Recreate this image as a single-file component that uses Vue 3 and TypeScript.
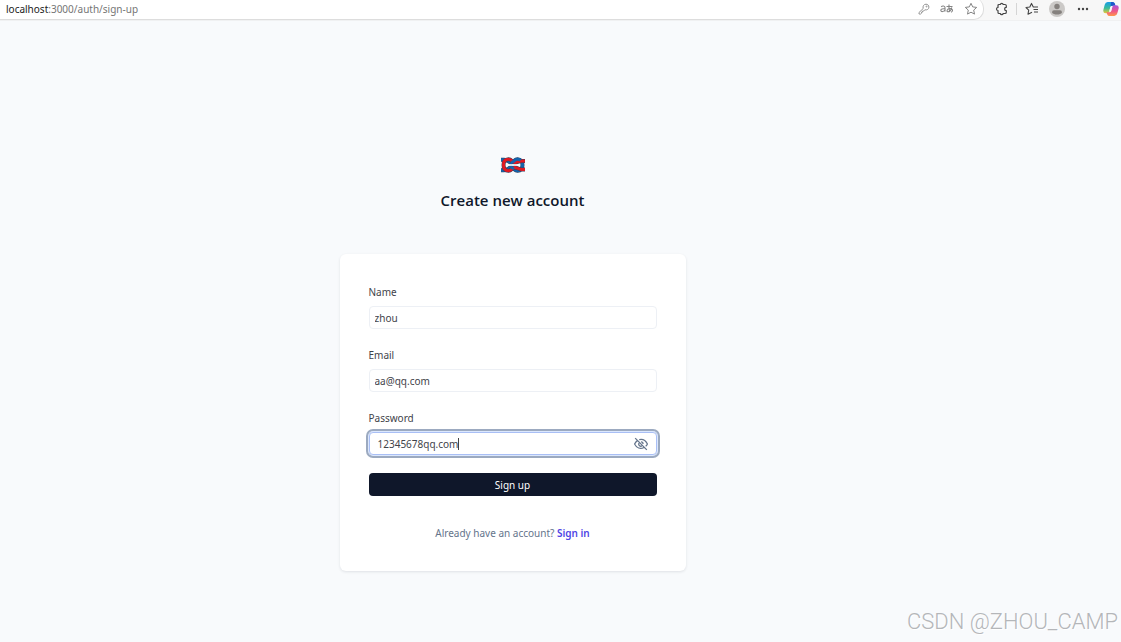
<script setup lang="ts">
import { ref } from 'vue'

const name = ref('zhou')
const email = ref('aa@qq.com')
const password = ref('12345678qq.com')
const visible = ref(true)
</script>

<template>
  <div class="screen">
    <header class="toolbar">
      <div class="address">
        <span class="url"><b>localhost</b>:3000/auth/sign-up</span>
        <button class="tool key" aria-label="Saved passwords">
          <svg width="12" height="12" viewBox="0 0 12 12" fill="none" stroke="#959595">
            <path d="M5.2 5.5C4.5 3.2 5.8 1.2 8 1.2c1.7 0 2.9 1.3 2.9 2.9C10.9 6.200 9 7.300 6.800 6.800L5.700 8H4.600v1.100H3.500v1.200L2.700 11H1V9.500z" />
            <circle cx="8.500" cy="3.500" r=".5" />
          </svg>
        </button>
        <button class="tool translate" aria-label="Translate">
          <svg width="14" height="12" viewBox="0 0 14 12" fill="none" stroke="#858585" stroke-width="1.100">
            <path d="M1.200 3.800c1-1.100 3.800-1.100 3.800.8v4M5 5.800C2.500 5.500.8 6.100.8 7.300c0 1.800 3 1.700 4.200-.3" />
            <path d="M6.500 3.500h6M9 1.500c-.3 3 0 5 .7 7M11.800 4.500C11 7 9.500 8.800 8 8.800S6.600 6 9.500 5.500s4.200 2.700 1.500 3.700" />
          </svg>
        </button>
        <button class="tool star" aria-label="Add to favorites">
          <svg width="14" height="14" viewBox="0 0 14 14" fill="none" stroke="#858585" stroke-linejoin="round">
            <path d="m7 1.300 1.700 3.600 4 .5-3 2.700.8 4L7 10.200l-3.500 1.900.8-4-3-2.700 4-.5z" />
          </svg>
        </button>
      </div>
      <button class="tool" aria-label="Extensions">
        <svg width="14" height="14" viewBox="0 0 14 14" fill="none" stroke="#444" stroke-width="1.200" stroke-linejoin="round">
          <path d="M4 2.500h1.300a1.500 1.500 0 0 1 2.900 0H10q1.300 0 1.300 1.300V5.300a1.700 1.700 0 0 0 0 3.400V10.200q0 1.300-1.300 1.300H8.200a1.500 1.500 0 0 1-2.900 0H4q-1 0-1-1V8.500a1.500 1.500 0 0 1 0-3V3.500q0-1 1-1z" />
        </svg>
      </button>
      <span class="divider"></span>
      <button class="tool favorites" aria-label="Favorites">
        <svg width="14" height="14" viewBox="0 0 14 14" fill="none" stroke="#444" stroke-width="1.100" stroke-linejoin="round">
          <path d="M13 5H8.300L6.500 1.400 4.800 5l-3.800.5 2.700 2.700-.7 4L7 10.200M8.500 7.500H13M9 10h4" />
        </svg>
      </button>
      <button class="tool profile" aria-label="Profile">
        <svg width="16" height="16" viewBox="0 0 16 16">
          <circle cx="8" cy="8" r="8" fill="#cbc9c7" />
          <circle cx="8" cy="5.500" r="2.700" fill="#85817e" />
          <path d="M3 11.500Q3 9.200 5 9.200h6q2 0 2 2.300c-1.500 2.700-8.500 2.700-10 0z" fill="#85817e" />
        </svg>
      </button>
      <button class="tool more" aria-label="More">
        <svg width="12" height="4" viewBox="0 0 12 4" fill="#444"><circle cx="2" cy="2" r="1.200" /><circle cx="6" cy="2" r="1.200" /><circle cx="10" cy="2" r="1.200" /></svg>
      </button>
      <button class="tool copilot" aria-label="Copilot">
        <svg width="16" height="16" viewBox="0 0 17 16">
          <defs>
            <linearGradient id="cool" x1="0" y1="0" x2="0" y2="1"><stop stop-color="#159be7" /><stop offset=".55" stop-color="#3bbd9a" /><stop offset="1" stop-color="#e9c832" /></linearGradient>
            <linearGradient id="warm" x1="0" y1="0" x2="0" y2="1"><stop stop-color="#a951dc" /><stop offset=".55" stop-color="#ef5688" /><stop offset="1" stop-color="#ff9848" /></linearGradient>
          </defs>
          <path d="M5 .5h5q2 0 2.600 2l.6 2H9.500q-1.200 0-1.600 1.300L6.600 11q-.5 1.500-2 1.500H3Q-.5 12.500.5 8.500l1.300-5Q2.500.5 5 .5z" fill="url(#cool)" />
          <path d="M8.500.5H10q2 0 2.600 2l.6 2H9.500q-1 0-1.500 1z" fill="#2056cb" />
          <path d="M12 15.500H7q-2 0-2.600-2l-.6-2H7q1.300 0 1.700-1.300L10 5.500Q10.500 4 12 4h2q3.500 0 2.500 4l-1.300 4.500Q14.500 15.500 12 15.500z" fill="url(#warm)" />
          <path d="M7.800 5.500h2L8.600 10.500H6.700z" fill="#f7f7f7" />
        </svg>
      </button>
    </header>

    <main class="page">
      <svg class="logo" width="24" height="16" viewBox="0 0 24 16" fill="none">
        <path class="edge" d="M0 2.700h3C7 2.700 8 6 10.500 5.500 13 5 13.500 2.300 16.500 2.300c3.500 0 5 2.700 5 5.700s-1.500 5.700-5 5.700c-3 0-3.500-2.700-6-3.200C8 10 7 13.300 3 13.300H0" />
        <path class="blue" d="M0 2.700h3C7 2.700 8 6 10.500 5.500 13 5 13.500 2.300 16.500 2.300c3.500 0 5 2.700 5 5.700s-1.500 5.700-5 5.700c-3 0-3.500-2.700-6-3.200C8 10 7 13.300 3 13.300H0" />
        <path class="edge" d="M24 4h-3C17 4 16 6 13.500 5.500 11 5 10.500 2.300 7.500 2.300 4 2.300 2.500 5 2.500 8s1.500 5.700 5 5.700c3 0 3.500-2.700 6-3.200 2.500-.5 3.500 2 7.500 2h3" />
        <path class="red" d="M24 4h-3C17 4 16 6 13.500 5.500 11 5 10.500 2.300 7.500 2.300 4 2.300 2.500 5 2.500 8s1.500 5.700 5 5.700c3 0 3.500-2.700 6-3.200 2.500-.5 3.500 2 7.500 2h3" />
        <path class="blue" d="M10 5.500C13 5.500 13.500 2.300 16.500 2.300q1.800 0 3 1" />
        <path class="blue" d="M9.500 10.300q2 .2 3.300 1.700" />
        <path d="M8 8h8" stroke="#e4edf4" stroke-width="1.600" />
      </svg>
      <h1>Create new account</h1>

      <form class="card" @submit.prevent>
        <div class="field">
          <label for="name">Name</label>
          <input id="name" v-model="name" type="text" />
        </div>
        <div class="field">
          <label for="email">Email</label>
          <input id="email" v-model="email" type="email" />
        </div>
        <div class="field secret">
          <label for="password">Password</label>
          <div class="password">
            <input id="password" v-model="password" :type="visible ? 'text' : 'password'" />
            <span class="caret"></span>
            <button type="button" class="eye" aria-label="Toggle password visibility" @click="visible = !visible">
              <svg width="14" height="14" viewBox="0 0 24 24" fill="none" stroke="#64748b" stroke-width="2.200">
                <path d="M2 2l20 20M9 4.600C15 3 20 6 23 12c-.8 1.600-1.800 3-3 4M6 6.200C4 7.500 2.300 9.500 1 12c3.500 7 10 9 16 6M8.700 10.500a3.500 3.500 0 0 0 4.800 4.800M12 8.500a3.500 3.500 0 0 1 3.500 3.500" />
              </svg>
            </button>
          </div>
        </div>
        <button class="submit" type="submit">Sign up</button>
        <p class="switch">Already have an account? <a href="#">Sign in</a></p>
      </form>
    </main>
    <div class="watermark">CSDN @ZHOU_CAMP</div>
  </div>
</template>

<style>
body {
  background: #f8fafc;
}
</style>

<style scoped>
.screen {
  position: relative;
  min-height: 100vh;
  overflow: hidden;
  background: #f8fafc;
  font-family: "Noto Sans", "Open Sans", sans-serif;
  font-size: 10px;
  color: #3f434a;
}
button {
  border: 0;
  padding: 0;
  background: none;
  font: inherit;
}
.toolbar {
  display: flex;
  align-items: center;
  height: 21px;
  padding: 0 2px 2px 0;
  box-sizing: border-box;
  background: #f7f7f7;
  border-bottom: 1px solid #f0f1f2;
}
.address {
  flex: 1;
  display: flex;
  align-items: center;
  gap: 10px;
  height: 22px;
  padding: 1px 5px 0 6px;
  box-sizing: border-box;
  background: #fff;
  border-bottom: 1px solid #ddd;
  border-right: 1px solid #ddd;
  border-radius: 0 10px 10px 0;
}
.url {
  flex: 1;
  color: #757575;
}
.url b {
  font-weight: 400;
  color: #222;
}
.tool {
  display: flex;
  align-items: center;
  justify-content: center;
  flex: none;
}
.address + .tool {
  margin-left: 11px;
}
.divider {
  width: 1px;
  height: 12px;
  margin: 0 8px 0 7px;
  background: #d5d5d5;
}
.profile {
  margin-left: 10px;
}
.more {
  margin-left: 12px;
}
.copilot {
  margin-left: 14px;
}
.page {
  display: flex;
  flex-direction: column;
  align-items: center;
  padding: 136px 96px 0 0;
}
.edge {
  stroke: #33415e;
  stroke-width: 4;
}
.blue {
  stroke: #1464ad;
  stroke-width: 3;
}
.red {
  stroke: #e01922;
  stroke-width: 3;
}
h1 {
  margin: 15px 0 42px;
  font-family: "Open Sans", "Noto Sans", sans-serif;
  font-size: 15px;
  line-height: 24px;
  font-weight: 600;
  color: #0f172a;
}
.card {
  display: flex;
  flex-direction: column;
  width: 346px;
  padding: 29px;
  box-sizing: border-box;
  background: #fff;
  border-radius: 6px;
  box-shadow: 0 1px 3px #0f172a1c;
}
.field {
  display: flex;
  flex-direction: column;
  gap: 5px;
  margin-bottom: 17px;
}
.secret {
  margin-bottom: 18px;
}
label {
  line-height: 18px;
}
input {
  width: 100%;
  height: 23px;
  padding: 0 5px;
  box-sizing: border-box;
  border: 1px solid #edf0f5;
  border-radius: 4px;
  outline: 0;
  background: #fff;
  font: inherit;
  color: inherit;
}
.password {
  position: relative;
  display: flex;
  border-radius: 4px;
  box-shadow: 0 0 0 1px #dbe7fd, 0 0 0 3px #9caac0;
}
.password input {
  padding: 0 26px 0 8px;
  border-color: #a9bff5;
}
.caret {
  position: absolute;
  top: 6px;
  left: 89px;
  width: 1px;
  height: 12px;
  background: #444;
}
.eye {
  position: absolute;
  top: 5px;
  right: 9px;
  display: flex;
}
.submit {
  height: 23px;
  border-radius: 4px;
  background: #0f172a;
  color: #fff;
}
.switch {
  margin: 29px 0 0;
  text-align: center;
  line-height: 17px;
  color: #64748b;
}
.switch a {
  color: #4f46e5;
  font-weight: 600;
  text-decoration: none;
}
.watermark {
  position: absolute;
  right: 3px;
  bottom: 8px;
  font-family: Roboto, "Liberation Sans", sans-serif;
  font-size: 22px;
  font-weight: 300;
  line-height: 24px;
  color: #b4b6b9;
  text-shadow: 1px 1px 0 #fff;
}
</style>
